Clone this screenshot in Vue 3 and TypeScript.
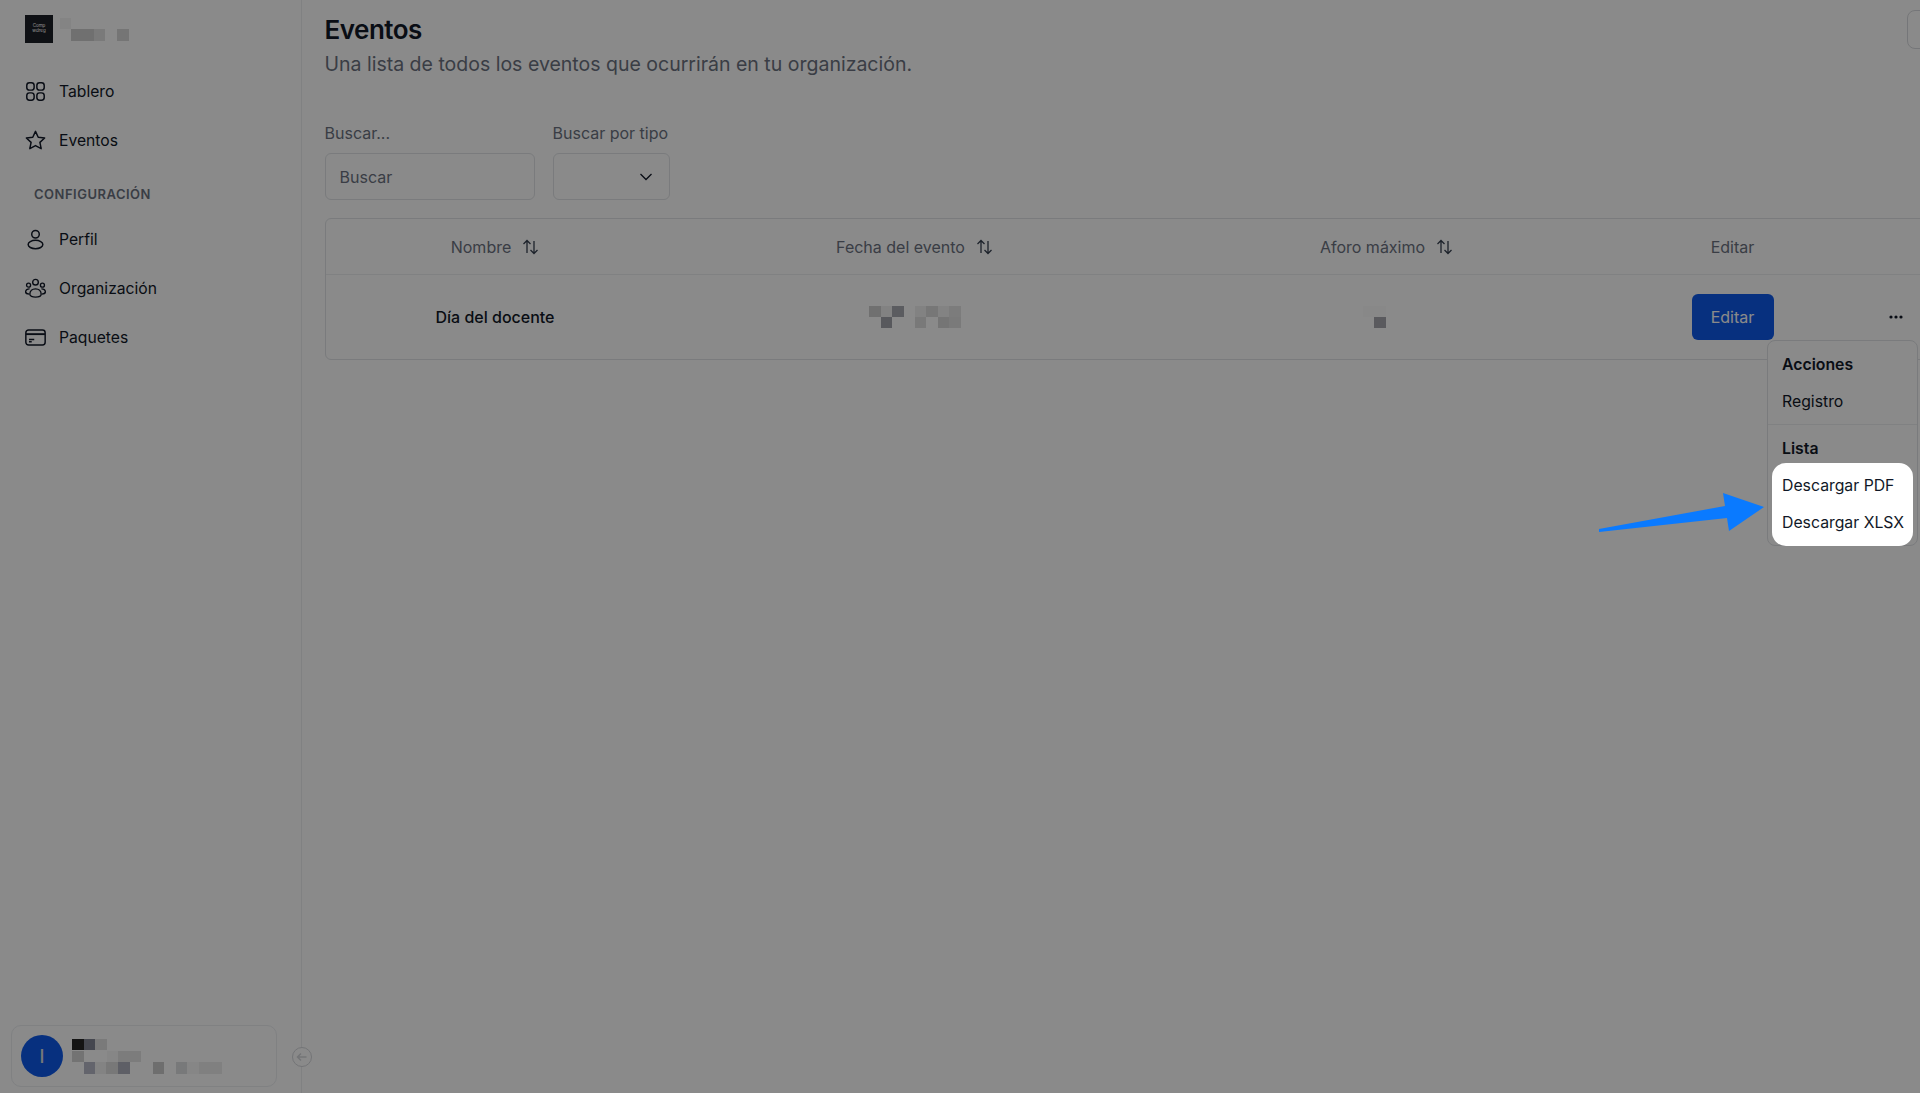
<script setup lang="ts">
// censored (pixelated) bits of the screenshot: [x, y, w, h, fill]
type Cell = [number, number, number, number, string]

const brandCells: Cell[] = [
  [0, 0, 11, 11, '#f4f4f4'],
  [11, 11, 23, 12, '#cfcfcf'],
  [34, 11, 11, 12, '#e2e2e2'],
  [57, 11, 12, 12, '#d8d8d8']
]

const userCells: Cell[] = [
  [0, 0, 12, 11, '#252525'],
  [12, 0, 11, 11, '#808492'],
  [23, 0, 12, 11, '#e2e2e2'],
  [0, 12, 12, 11, '#d4d4d4'],
  [35, 12, 11, 11, '#f8f8f8'],
  [46, 12, 23, 11, '#e6e6e6'],
  [12, 23, 11, 12, '#b7b9c8'],
  [23, 23, 11, 12, '#f2f2f2'],
  [34, 23, 12, 12, '#dedede'],
  [46, 23, 12, 12, '#aeb0bd'],
  [81, 23, 11, 12, '#cccccc'],
  [104, 23, 11, 12, '#dedfe2'],
  [115, 23, 12, 12, '#f8f8f8'],
  [127, 23, 23, 12, '#ededed']
]

const dateCells: Cell[] = [
  [0, 0, 12, 11, '#cfcfcf'],
  [12, 0, 11, 11, '#f0f0f0'],
  [23, 0, 12, 11, '#a9aab2'],
  [46, 0, 11, 11, '#f0f0f0'],
  [57, 0, 12, 11, '#dcdcdc'],
  [69, 0, 11, 11, '#f2f2f2'],
  [80, 0, 12, 11, '#e6e6e6'],
  [12, 11, 11, 11, '#a3a4ac'],
  [46, 11, 11, 11, '#e0e0e0'],
  [69, 11, 11, 11, '#d8d8d8'],
  [80, 11, 12, 11, '#e2e2e2']
]

const capacityCells: Cell[] = [
  [0, 0, 23, 11, '#fbfbfb'],
  [11, 11, 12, 11, '#a6a7ae']
]

const columns = ['Nombre', 'Fecha del evento', 'Aforo máximo']
</script>

<template>
  <div class="page">
    <aside class="sidebar">
      <div class="brand">
        <div class="logo">Comp<br />wdreg</div>
        <svg class="mosaic" width="70" height="24">
          <rect v-for="(c, i) in brandCells" :key="i" :x="c[0]" :y="c[1]" :width="c[2]" :height="c[3]" :fill="c[4]" />
        </svg>
      </div>

      <nav class="nav">
        <a class="nav-item">
          <svg class="nav-icon" viewBox="0 0 20 20" fill="none" stroke="currentColor" stroke-width="1.4">
            <rect x="1.7" y="1.7" width="7" height="7" rx="2.6" />
            <rect x="11.3" y="1.7" width="7" height="7" rx="2.6" />
            <rect x="1.7" y="11.3" width="7" height="7" rx="2.6" />
            <rect x="11.3" y="11.3" width="7" height="7" rx="2.6" />
          </svg>
          Tablero
        </a>
        <a class="nav-item">
          <svg class="nav-icon" viewBox="0 0 20 20" fill="none" stroke="currentColor" stroke-width="1.4" stroke-linejoin="round">
            <path d="M10 1.3l2.6 5.6 6.1.7-4.5 4.2 1.2 6-5.4-3-5.4 3 1.2-6L1.3 7.6l6.1-.7z" />
          </svg>
          Eventos
        </a>
      </nav>

      <div class="nav-title">CONFIGURACIÓN</div>

      <nav class="nav">
        <a class="nav-item">
          <svg class="nav-icon" viewBox="0 0 20 20" fill="none" stroke="currentColor" stroke-width="1.4">
            <circle cx="10" cy="5" r="3.6" />
            <ellipse cx="10" cy="14.8" rx="7" ry="4" />
          </svg>
          Perfil
        </a>
        <a class="nav-item">
          <svg class="nav-icon" viewBox="0 0 20 20" fill="none" stroke="currentColor" stroke-width="1.3">
            <circle cx="10" cy="4" r="2.7" />
            <circle cx="3.4" cy="6.8" r="1.9" />
            <circle cx="16.6" cy="6.8" r="1.9" />
            <path d="M4.6 15.5c0-3.2 2.3-5.2 5.4-5.2s5.4 2 5.4 5.2c0 1.7-2.4 2.7-5.4 2.7s-5.4-1-5.4-2.7z" />
            <path d="M4.4 10.3C2.2 10.2.6 11.400.6 13.200c0 1.200 1.300 2 3.400 2.100M15.600 10.300c2.200-.1 3.800 1.100 3.800 2.900 0 1.200-1.300 2-3.400 2.100" />
          </svg>
          Organización
        </a>
        <a class="nav-item">
          <svg class="nav-icon" viewBox="0 0 20 20" fill="none" stroke="currentColor" stroke-width="1.4">
            <rect x="0.8" y="2.8" width="18.400" height="14.400" rx="2.600" />
            <path d="M1 6.800h18" stroke-width="1.800" />
            <path d="M3.800 11.800h5M3.800 14h2.600" />
          </svg>
          Paquetes
        </a>
      </nav>

      <div class="user-card">
        <div class="avatar">I</div>
        <svg class="mosaic" width="150" height="35">
          <rect v-for="(c, i) in userCells" :key="i" :x="c[0]" :y="c[1]" :width="c[2]" :height="c[3]" :fill="c[4]" />
        </svg>
      </div>
      <button class="collapse">
        <svg width="12" height="12" viewBox="0 0 12 12" fill="none" stroke="currentColor" stroke-width="1.500">
          <path d="M10.500 6H1.500M5 2.500L1.500 6 5 9.500" />
        </svg>
      </button>
    </aside>

    <main class="main">
      <header class="head">
        <div>
          <h1>Eventos</h1>
          <p class="subtitle">Una lista de todos los eventos que ocurrirán en tu organización.</p>
        </div>
        <div class="corner-box"></div>
      </header>

      <div class="filters">
        <label class="field">
          <span class="field-label">Buscar...</span>
          <input class="input" type="text" placeholder="Buscar" />
        </label>
        <div class="field">
          <span class="field-label">Buscar por tipo</span>
          <div class="select">
            <svg width="16" height="16" viewBox="0 0 16 16" fill="none" stroke="#111827" stroke-width="1.300">
              <path d="M2.500 5l5.500 5.500L13.500 5" />
            </svg>
          </div>
        </div>
      </div>

      <div class="table">
        <div class="row row-head">
          <div v-for="col in columns" :key="col" class="cell">
            {{ col }}
            <svg class="sort" width="17" height="18" viewBox="0 0 17 18" fill="none" stroke="currentColor" stroke-width="1.300">
              <path d="M5 15V2.500M1.500 6L5 2.500 8.500 6" />
              <path d="M12 3v12.500M8.500 12l3.500 3.500 3.500-3.500" />
            </svg>
          </div>
          <div class="cell">Editar</div>
          <div class="cell"></div>
        </div>
        <div class="row row-body">
          <div class="cell name">Día del docente</div>
          <div class="cell">
            <svg class="mosaic" width="92" height="22">
              <rect v-for="(c, i) in dateCells" :key="i" :x="c[0]" :y="c[1]" :width="c[2]" :height="c[3]" :fill="c[4]" />
            </svg>
          </div>
          <div class="cell">
            <svg class="mosaic" width="23" height="22">
              <rect v-for="(c, i) in capacityCells" :key="i" :x="c[0]" :y="c[1]" :width="c[2]" :height="c[3]" :fill="c[4]" />
            </svg>
          </div>
          <div class="cell"><button class="edit-btn">Editar</button></div>
          <div class="cell">
            <svg width="16" height="4" viewBox="0 0 16 4" fill="#111827">
              <circle cx="3" cy="2" r="1.600" />
              <circle cx="8" cy="2" r="1.600" />
              <circle cx="13" cy="2" r="1.600" />
            </svg>
          </div>
        </div>
      </div>

      <div class="menu">
        <div class="menu-title">Acciones</div>
        <div class="menu-item">Registro</div>
        <div class="menu-sep"></div>
        <div class="menu-title">Lista</div>
        <div class="menu-highlight">
          <div class="menu-item">Descargar PDF</div>
          <div class="menu-item">Descargar XLSX</div>
        </div>
      </div>
    </main>

    <div class="overlay"></div>

    <svg class="arrow" width="170" height="45" viewBox="0 0 170 45">
      <path d="M2 36L128 13 126 0 167 14 132 38 130 25 2 39z" fill="#0a7aff" />
    </svg>
  </div>
</template>

<style>
html,
body {
  margin: 0;
  background: #fff;
}
</style>

<style scoped>
.page {
  position: relative;
  display: flex;
  height: 1093px;
  overflow: hidden;
  font-family: Inter, 'Liberation Sans', sans-serif;
  color: #111827;
  background: #fff;
}

.sidebar {
  position: relative;
  width: 302px;
  flex: none;
  box-sizing: border-box;
  padding: 15px 0 0 25px;
  border-right: 1px solid #eceef1;
}
.brand {
  display: flex;
  gap: 7px;
  margin-bottom: 24px;
}
.logo {
  width: 28px;
  height: 28px;
  box-sizing: border-box;
  padding-top: 8px;
  background: #1d2027;
  color: #fff;
  font-size: 4.500px;
  line-height: 5px;
  text-align: center;
}
.mosaic {
  display: block;
  flex: none;
}
.brand .mosaic {
  margin-top: 3px;
}
.nav {
  display: flex;
  flex-direction: column;
}
.nav-item {
  display: flex;
  align-items: center;
  gap: 13px;
  height: 48.800px;
  font-size: 15.700px;
  color: #111827;
}
.nav-icon {
  width: 21px;
  height: 21px;
  flex: none;
}
.nav-title {
  margin: 21px 0 14px 9px;
  font-size: 13px;
  line-height: 16px;
  font-weight: 600;
  letter-spacing: 0.5px;
  color: #6b7280;
}
.user-card {
  position: absolute;
  left: 11px;
  top: 1025px;
  width: 266px;
  height: 62px;
  box-sizing: border-box;
  display: flex;
  align-items: center;
  gap: 9px;
  padding: 0 9px;
  border: 1px solid #eceef1;
  border-radius: 10px;
}
.avatar {
  width: 42px;
  height: 42px;
  flex: none;
  display: flex;
  align-items: center;
  justify-content: center;
  border-radius: 50%;
  background: #0d5aeb;
  color: #ddd;
  font-size: 18px;
  font-weight: 500;
}
.collapse {
  position: absolute;
  left: 292px;
  top: 1047px;
  width: 20px;
  height: 20px;
  padding: 0;
  display: flex;
  align-items: center;
  justify-content: center;
  border: 1.500px solid #d5d7db;
  border-radius: 50%;
  background: #fff;
  color: #d5d7db;
}

.main {
  flex: 1;
  min-width: 0;
  padding: 14px 0 0 22.500px;
}
.head {
  display: flex;
  justify-content: space-between;
}
h1 {
  margin: 0;
  font-size: 26px;
  line-height: 32px;
  font-weight: 600;
  letter-spacing: -0.5px;
}
.subtitle {
  margin: 5px 0 0;
  font-size: 19.500px;
  line-height: 26px;
  color: #6b7280;
}
.corner-box {
  width: 40px;
  height: 39px;
  margin: -4px -27px 0 0;
  box-sizing: border-box;
  border: 1px solid #d9dbdf;
  border-radius: 8px;
}
.filters {
  display: flex;
  gap: 18px;
  margin-top: 46px;
}
.field {
  display: flex;
  flex-direction: column;
  gap: 10px;
}
.field-label {
  font-size: 16px;
  line-height: 20px;
  color: #6b7280;
}
.input {
  width: 210px;
  height: 47px;
  box-sizing: border-box;
  padding: 0 14px;
  border: 1px solid #e1e3e7;
  border-radius: 6px;
  font: inherit;
  font-size: 16px;
  outline: none;
  background: #fff;
}
.input::placeholder {
  color: #6b7280;
  opacity: 1;
}
.select {
  width: 117px;
  height: 47px;
  box-sizing: border-box;
  display: flex;
  align-items: center;
  justify-content: flex-end;
  padding-right: 15px;
  border: 1px solid #e1e3e7;
  border-radius: 6px;
}

.table {
  width: 1640px;
  margin-top: 18px;
  box-sizing: border-box;
  border: 1px solid #e1e3e7;
  border-radius: 6px;
}
.row {
  display: grid;
  grid-template-columns: 339px 500px 432px 272px 54px;
}
.row-head {
  height: 55px;
  border-bottom: 1px solid #eceef1;
  font-size: 16px;
  color: #6b7280;
}
.row-head .cell:nth-child(3) {
  padding-left: 12px;
}
.row-body {
  height: 84px;
}
.row-body .cell:nth-child(3) {
  padding-right: 12px;
}
.cell {
  display: flex;
  align-items: center;
  justify-content: center;
  gap: 11px;
}
.sort {
  color: #374151;
}
.name {
  font-size: 16px;
  font-weight: 500;
  color: #111827;
}
.edit-btn {
  width: 82px;
  height: 46px;
  border: none;
  border-radius: 6px;
  background: #0d5aeb;
  color: #fff;
  font: inherit;
  font-size: 16px;
}

.menu {
  position: absolute;
  left: 1767px;
  top: 340px;
  width: 151px;
  height: 206px;
  box-sizing: border-box;
  padding: 5px 4px;
  background: #fff;
  border: 1px solid #e1e3e7;
  border-radius: 8px;
  font-size: 15.800px;
}
.menu-title {
  height: 37px;
  padding-left: 10px;
  line-height: 37px;
  font-weight: 600;
}
.menu-item {
  height: 37px;
  padding-left: 10px;
  line-height: 37px;
  white-space: nowrap;
}
.menu-sep {
  height: 1px;
  margin: 4px -4px 5px;
  background: #eceef1;
}
.menu-highlight {
  position: relative;
  z-index: 20;
  margin-top: -4px;
  height: 83px;
  box-sizing: border-box;
  padding-top: 4px;
  background: #fff;
  border-radius: 14px;
}

.overlay {
  position: absolute;
  inset: 0;
  z-index: 10;
  background: rgba(0, 0, 0, 0.46);
}
.arrow {
  position: absolute;
  left: 1597px;
  top: 493px;
  z-index: 20;
}
</style>
